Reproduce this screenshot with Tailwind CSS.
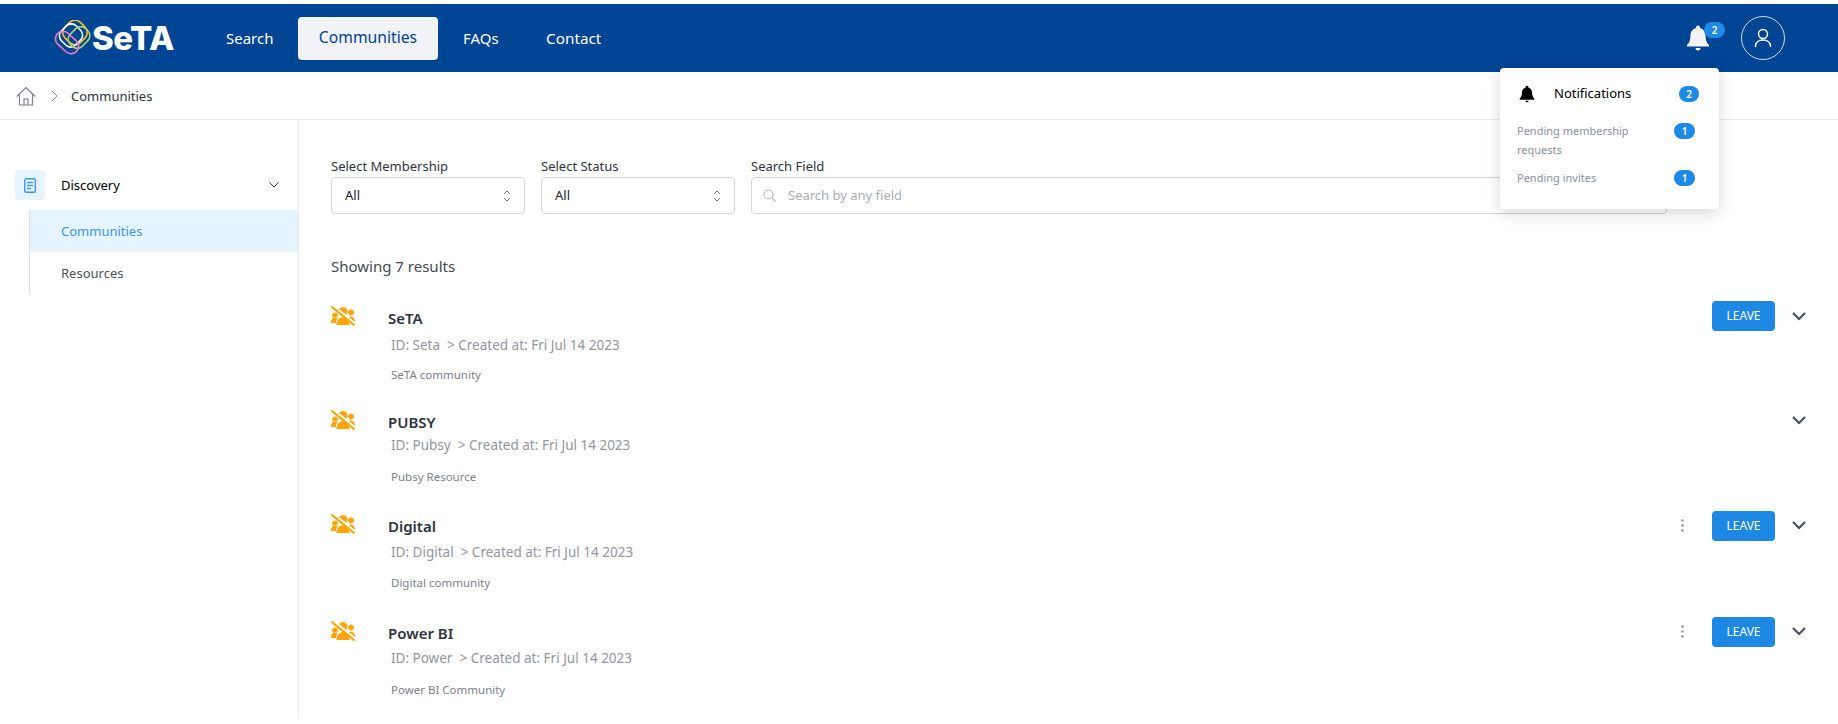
<!DOCTYPE html>
<html lang="en">
<head>
    <meta charset="UTF-8">
    <title>SeTA Communities</title>
    <script src="https://cdn.jsdelivr.net/npm/@tailwindcss/browser@4"></script>
</head>
<body class="bg-white font-['Noto_Sans',sans-serif] text-[13px] text-[#2d3340] h-[724px] overflow-hidden relative">

<div class="pt-1">
    <!-- Navbar -->
    <header class="h-[68px] bg-[#004494] flex items-center">
        <a class="flex items-center ml-[53px] w-[173px]">
            <svg width="38" height="36" viewBox="0 0 38 36" fill="none" stroke-width="1.600">
                <rect x="11" y="1.500" width="22" height="22" rx="8" transform="rotate(45 22 12.500)" stroke="#f2c230"/>
                <rect x="8" y="5" width="20" height="21" rx="7" transform="rotate(45 18 15.500)" stroke="#ffffff"/>
                <rect x="15" y="9" width="22" height="17" rx="7" transform="rotate(-45 26 17.500)" stroke="#a7d36a"/>
                <rect x="1" y="15" width="26" height="15" rx="7.500" transform="rotate(42 14 22.500)" stroke="#e77fc6"/>
            </svg>
            <span class="ml-[1px] font-['Inter',sans-serif] font-extrabold text-[33px] leading-none text-white tracking-[-0.5px]">SeTA</span>
        </a>
        <nav class="flex items-center text-white text-[15px]">
            <a class="w-[72px]">Search</a>
            <a class="w-[140px] h-[43px] rounded bg-[#f1f3f6] text-[#004494] text-[15.700px] flex items-center justify-center">Communities</a>
            <a class="ml-[25px] w-[83px]">FAQs</a>
            <a class="text-[15.300px]">Contact</a>
        </nav>
        <div class="ml-auto flex items-center mr-[53px]">
            <div class="relative w-[54px] h-[44px] flex items-center">
                <svg class="ml-[-1px]" width="24" height="26" viewBox="0 0 24 26" fill="#f1f3f6">
                    <path d="M12 0.500c1.200 0 2 .9 2 2v.6c3.600 1 5.600 4 5.600 7.800 0 4.300.9 6.500 3.400 9.100v1.500H1v-1.500c2.500-2.600 3.400-4.800 3.400-9.100 0-3.800 2-6.800 5.600-7.800v-.6c0-1.100.8-2 2-2z"/>
                    <path d="M9.500 23h5a2.500 2.500 0 0 1-5 0z"/>
                </svg>
                <span class="absolute left-[17px] top-[6px] w-[21px] h-4 rounded-full bg-[#1e88e5] text-white text-[10px] font-semibold flex items-center justify-center">2</span>
            </div>
            <div class="w-[44px] h-[44px] rounded-full border border-white/80 flex items-center justify-center">
                <svg width="18" height="20" viewBox="0 0 18 20" fill="none" stroke="#ffffff" stroke-width="1.500" stroke-linecap="round">
                    <circle cx="9" cy="6" r="4.500"/>
                    <path d="M1.500 18.500c0-4 3-6.500 7.500-6.500s7.500 2.500 7.500 6.500"/>
                </svg>
            </div>
        </div>
    </header>

    <!-- Breadcrumb -->
    <div class="h-[48px] border-b border-[#e8e9ec] flex items-center pl-4">
        <svg width="20" height="20" viewBox="0 0 20 20" fill="none" stroke="#7d828c" stroke-width="1.200">
            <path d="M0.800 10.500 10 1.500l9.200 9M3.500 8.500v10.500h13V8.500M8 19v-6h4v6"/>
        </svg>
        <svg class="ml-[15px]" width="7" height="12" viewBox="0 0 7 12" fill="none" stroke="#7d828c" stroke-width="1"><path d="M1 1l5 5-5 5"/></svg>
        <span class="ml-[13px] pt-[2px] text-[#2d3340]">Communities</span>
    </div>

    <div class="flex h-[599px]">
        <!-- Sidebar -->
        <aside class="w-[299px] border-r border-[#e8e9ec] pt-[50px] shrink-0">
            <div class="flex items-center pl-[15px] h-[30px]">
                <span class="w-[30px] h-[30px] rounded bg-[#e5f4fe] flex items-center justify-center">
                    <svg width="12" height="15" viewBox="0 0 12 15" fill="none" stroke="#3f97f0" stroke-width="1.400">
                        <rect x="0.700" y="0.700" width="10.600" height="13.600" rx="1.500"/>
                        <path d="M3 4.500h6M3 7.500h6M3 10.500h4"/>
                    </svg>
                </span>
                <span class="ml-4 pt-[2px] text-black">Discovery</span>
                <svg class="ml-auto mr-[19px]" width="10" height="6" viewBox="0 0 10 6" fill="none" stroke="#2d3340" stroke-width="1"><path d="M0.500 0.500 5 5l4.500-4.500"/></svg>
            </div>
            <div class="ml-[29px] mt-[10px] border-l border-[#dcdee3]">
                <a class="h-[42px] pt-[2px] bg-[#e5f4fe] text-[#3b96f2] flex items-center pl-[31px]">Communities</a>
                <a class="h-[42px] pt-[2px] text-[#4b4f58] flex items-center pl-[31px]">Resources</a>
            </div>
        </aside>

        <main class="flex-1 pl-8 pr-8">
            <!-- Filtros -->
            <div class="flex mt-[36px] gap-[16px]">
                <label class="w-[194px] block">
                    <span class="block leading-[20px] h-[21px]">Select Membership</span>
                    <div class="h-[37px] border border-[#d2d5dc] rounded flex items-center justify-between px-[13px] text-[#1c1c2b]">All
                        <svg width="8" height="12" viewBox="0 0 8 12" fill="none" stroke="#6d727c"><path d="M1 4l3-3 3 3M1 8l3 3 3-3"/></svg>
                    </div>
                </label>
                <label class="w-[194px] block">
                    <span class="block leading-[20px] h-[21px]">Select Status</span>
                    <div class="h-[37px] border border-[#d2d5dc] rounded flex items-center justify-between px-[13px] text-[#1c1c2b]">All
                        <svg width="8" height="12" viewBox="0 0 8 12" fill="none" stroke="#6d727c"><path d="M1 4l3-3 3 3M1 8l3 3 3-3"/></svg>
                    </div>
                </label>
                <label class="w-[916px] block">
                    <span class="block leading-[20px] h-[21px]">Search Field</span>
                    <div class="h-[37px] border border-[#d2d5dc] rounded flex items-center px-[11px] text-[#a9adb6]">
                        <svg width="13" height="13" viewBox="0 0 13 13" fill="none" stroke="#b4b7bf" stroke-width="1.100"><circle cx="5.500" cy="5.500" r="4.500"/><path d="M9 9l3.500 3.500"/></svg>
                        <span class="ml-[12px]">Search by any field</span>
                    </div>
                </label>
            </div>

            <p class="mt-[41px] text-[15px] leading-[22px] text-[#444a55]">Showing 7 results</p>

            <!-- Lista de comunidades -->
            <div class="mt-[24px]">
                <div class="h-[104px] flex">
                    <svg class="mt-[5px] w-6 h-5 shrink-0" viewBox="0 0 24 20"><path fill="#ffa50a" d="M12 1a4.500 4.500 0 1 0 .010 0zM20 3.500a3 3 0 1 0 .010 0zM4 6.500a2.800 2.800 0 1 0 .010 0zM0 16c0-3 1.800-4.500 4-4.500 1 0 1.800.3 2.500.800C5.500 14 5 15.500 5 17H0zM5.500 19c0-5 3-8 6.500-8s6.500 3 6.500 8zM19 10.500c3 0 5 1.800 5 5V17h-4.500c0-2.500-.7-4.300-2-5.700.5-.5 1-.8 1.500-.8z"/><path stroke="#ffffff" stroke-width="3" d="M2 0l22 18"/><path stroke="#ffa50a" stroke-width="2" d="M0.500 0.500l23 19"/></svg>
                    <div class="ml-[33px] flex-1">
                        <h3 class="font-semibold text-[15px] leading-[34px] h-[34px] text-[#2d3340]">SeTA</h3>
                        <p class="ml-[3px] text-[13.500px] leading-[20px] text-[#92969f]">ID: Seta &nbsp;&gt; Created at: Fri Jul 14 2023</p>
                        <p class="ml-[3px] mt-[12px] text-[11.500px] leading-[16px] text-[#7d818b]">SeTA community</p>
                    </div>
                    <button class="w-[63px] h-[30px] rounded bg-[#1e88e5] text-white text-[12px]">LEAVE</button>
                    <svg class="ml-[17px] mt-[11px]" width="14" height="9" viewBox="0 0 14 9" fill="none" stroke="#4b515c" stroke-width="2.200"><path d="M1 1l6 6 6-6"/></svg>
                </div>
                <div class="h-[104px] flex">
                    <svg class="mt-[5px] w-6 h-5 shrink-0" viewBox="0 0 24 20"><path fill="#ffa50a" d="M12 1a4.500 4.500 0 1 0 .010 0zM20 3.500a3 3 0 1 0 .010 0zM4 6.500a2.800 2.800 0 1 0 .010 0zM0 16c0-3 1.800-4.500 4-4.500 1 0 1.800.3 2.500.800C5.500 14 5 15.500 5 17H0zM5.500 19c0-5 3-8 6.500-8s6.500 3 6.500 8zM19 10.500c3 0 5 1.800 5 5V17h-4.500c0-2.500-.7-4.300-2-5.700.5-.5 1-.8 1.500-.8z"/><path stroke="#ffffff" stroke-width="3" d="M2 0l22 18"/><path stroke="#ffa50a" stroke-width="2" d="M0.500 0.500l23 19"/></svg>
                    <div class="ml-[33px] flex-1">
                        <h3 class="font-semibold text-[15px] leading-[34px] h-[34px] text-[#2d3340]">PUBSY</h3>
                        <p class="ml-[3px] mt-[-4px] text-[13.500px] leading-[20px] text-[#92969f]">ID: Pubsy &nbsp;&gt; Created at: Fri Jul 14 2023</p>
                        <p class="ml-[3px] mt-[14px] text-[11.500px] leading-[16px] text-[#7d818b]">Pubsy Resource</p>
                    </div>
                    <svg class="ml-[17px] mt-[11px]" width="14" height="9" viewBox="0 0 14 9" fill="none" stroke="#4b515c" stroke-width="2.200"><path d="M1 1l6 6 6-6"/></svg>
                </div>
                <div class="h-[107px] flex">
                    <svg class="mt-[5px] w-6 h-5 shrink-0" viewBox="0 0 24 20"><path fill="#ffa50a" d="M12 1a4.500 4.500 0 1 0 .010 0zM20 3.500a3 3 0 1 0 .010 0zM4 6.500a2.800 2.800 0 1 0 .010 0zM0 16c0-3 1.800-4.500 4-4.500 1 0 1.800.3 2.500.800C5.500 14 5 15.500 5 17H0zM5.500 19c0-5 3-8 6.500-8s6.500 3 6.500 8zM19 10.500c3 0 5 1.800 5 5V17h-4.500c0-2.500-.7-4.300-2-5.700.5-.5 1-.8 1.500-.8z"/><path stroke="#ffffff" stroke-width="3" d="M2 0l22 18"/><path stroke="#ffa50a" stroke-width="2" d="M0.500 0.500l23 19"/></svg>
                    <div class="ml-[33px] flex-1">
                        <h3 class="font-semibold text-[15px] leading-[34px] h-[34px] text-[#2d3340]">Digital</h3>
                        <p class="ml-[3px] mt-[-1px] text-[13.500px] leading-[20px] text-[#92969f]">ID: Digital &nbsp;&gt; Created at: Fri Jul 14 2023</p>
                        <p class="ml-[3px] mt-[13px] text-[11.500px] leading-[16px] text-[#7d818b]">Digital community</p>
                    </div>
                    <svg class="mt-[10px] mr-[28px]" width="3" height="13" viewBox="0 0 3 13" fill="#8d919b"><circle cx="1.500" cy="1.500" r="1.200"/><circle cx="1.500" cy="6.500" r="1.200"/><circle cx="1.500" cy="11.500" r="1.200"/></svg>
                    <button class="mt-[2px] w-[63px] h-[30px] rounded bg-[#1e88e5] text-white text-[12px]">LEAVE</button>
                    <svg class="ml-[17px] mt-[12px]" width="14" height="9" viewBox="0 0 14 9" fill="none" stroke="#4b515c" stroke-width="2.200"><path d="M1 1l6 6 6-6"/></svg>
                </div>
                <div class="h-[103px] flex">
                    <svg class="mt-[5px] w-6 h-5 shrink-0" viewBox="0 0 24 20"><path fill="#ffa50a" d="M12 1a4.500 4.500 0 1 0 .010 0zM20 3.500a3 3 0 1 0 .010 0zM4 6.500a2.800 2.800 0 1 0 .010 0zM0 16c0-3 1.800-4.500 4-4.500 1 0 1.800.3 2.500.800C5.500 14 5 15.500 5 17H0zM5.500 19c0-5 3-8 6.500-8s6.500 3 6.500 8zM19 10.500c3 0 5 1.800 5 5V17h-4.500c0-2.500-.7-4.300-2-5.700.5-.5 1-.8 1.500-.8z"/><path stroke="#ffffff" stroke-width="3" d="M2 0l22 18"/><path stroke="#ffa50a" stroke-width="2" d="M0.500 0.500l23 19"/></svg>
                    <div class="ml-[33px] flex-1">
                        <h3 class="font-semibold text-[15px] leading-[34px] h-[34px] text-[#2d3340]">Power BI</h3>
                        <p class="ml-[3px] mt-[-2px] text-[13.500px] leading-[20px] text-[#92969f]">ID: Power &nbsp;&gt; Created at: Fri Jul 14 2023</p>
                        <p class="ml-[3px] mt-[14px] text-[11.500px] leading-[16px] text-[#7d818b]">Power BI Community</p>
                    </div>
                    <svg class="mt-[9px] mr-[28px]" width="3" height="13" viewBox="0 0 3 13" fill="#8d919b"><circle cx="1.500" cy="1.500" r="1.200"/><circle cx="1.500" cy="6.500" r="1.200"/><circle cx="1.500" cy="11.500" r="1.200"/></svg>
                    <button class="mt-[1px] w-[63px] h-[30px] rounded bg-[#1e88e5] text-white text-[12px]">LEAVE</button>
                    <svg class="ml-[17px] mt-[11px]" width="14" height="9" viewBox="0 0 14 9" fill="none" stroke="#4b515c" stroke-width="2.200"><path d="M1 1l6 6 6-6"/></svg>
                </div>
            </div>
        </main>
    </div>
</div>

<!-- Notificaciones -->
<div class="absolute left-[1500px] top-[68px] w-[219px] h-[141px] bg-white rounded shadow-[0_4px_16px_rgba(0,0,0,0.16)]">
    <div class="flex items-center h-[26px] mt-[13px] pl-[19px] pr-[20px]">
        <svg width="16" height="18" viewBox="0 0 24 26" fill="#000000">
            <path d="M12 0.500c1.200 0 2 .9 2 2v.6c3.600 1 5.600 4 5.600 7.800 0 4.300.9 6.500 3.400 9.100v1.500H1v-1.500c2.500-2.600 3.400-4.800 3.400-9.100 0-3.800 2-6.800 5.600-7.800v-.6c0-1.100.8-2 2-2z"/>
            <path d="M9.500 23h5a2.500 2.500 0 0 1-5 0z"/>
        </svg>
        <span class="ml-[19px] text-black">Notifications</span>
        <span class="ml-auto w-5 h-4 rounded-full bg-[#1e88e5] text-white text-[10px] font-semibold flex items-center justify-center">2</span>
    </div>
    <div class="mt-[14px] pl-[17px] pr-6 flex justify-between items-start text-[11px] leading-[19px] text-[#8b8fa0]">
        <span class="w-[125px]">Pending membership requests</span>
        <span class="mt-[2px] w-[21px] h-4 rounded-full bg-[#1e88e5] text-white text-[10px] font-semibold flex items-center justify-center">1</span>
    </div>
    <div class="mt-[9px] pl-[17px] pr-6 flex justify-between items-start text-[11px] leading-[19px] text-[#8b8fa0]">
        <span>Pending invites</span>
        <span class="mt-[2px] w-[21px] h-4 rounded-full bg-[#1e88e5] text-white text-[10px] font-semibold flex items-center justify-center">1</span>
    </div>
</div>

</body>
</html>
